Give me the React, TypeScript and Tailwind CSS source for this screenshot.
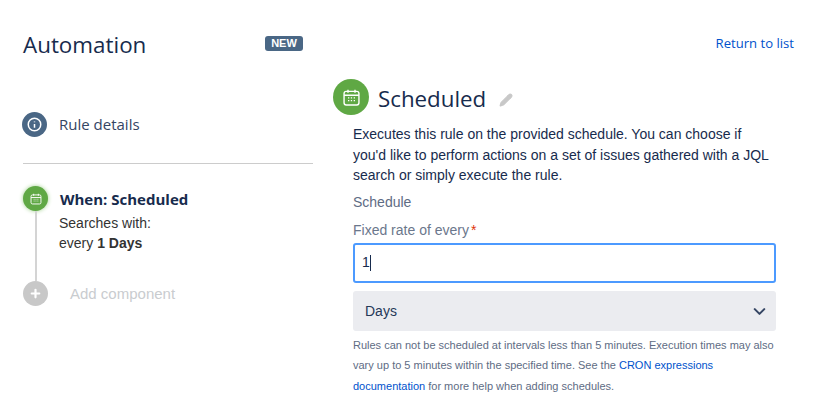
import { Pencil, ChevronDown, Plus } from 'lucide-react'

function CalendarIcon({ size }: { size: number }) {
  return (
    <svg width={size} height={size} viewBox="0 0 24 24" fill="none" stroke="currentColor">
      <rect x="3.5" y="5" width="17" height="15.5" rx="2.5" strokeWidth="1.6" />
      <path d="M3.5 9.5h17M8 3v3.5M16 3v3.5" strokeWidth="1.6" />
      <path d="M8 12.5h1.5M11.2 12.5h1.5M14.5 12.5h1.5M8 15.5h1.5M11.2 15.5h1.5M14.5 15.5h1.5" strokeWidth="1.4" />
    </svg>
  )
}

export default function App() {
  return (
    <div className="w-[813px] h-[407px] bg-white overflow-hidden flex font-['Liberation_Sans',sans-serif] text-[#253858]">
      {/* Sidebar */}
      <div className="w-[333px] shrink-0 pl-[23px] pr-[20px] pt-[29px]">
        <div className="flex items-start justify-between pr-[10px] h-[32px]">
          <h1 className="font-['Open_Sans',sans-serif] text-[22.4px] leading-[32px] text-[#172b4d]">Automation</h1>
          <span className="mt-[7px] h-[15px] w-[38px] rounded-[3px] bg-[#4a6785] text-white text-[11px] leading-[15px] font-bold text-center">NEW</span>
        </div>

        <div className="flex items-center gap-[12px] mt-[51px] -ml-[1px]">
          <div className="w-[25px] h-[25px] rounded-full bg-[#4a6785] flex items-center justify-center text-white">
            <svg width="15" height="15" viewBox="0 0 24 24" fill="none" stroke="currentColor" strokeWidth="2.4">
              <circle cx="12" cy="12" r="10" />
              <path d="M12 11v6M12 7v1.5" />
            </svg>
          </div>
          <span className="font-['Open_Sans',sans-serif] text-[15px] text-[#344563]">Rule details</span>
        </div>

        <div className="border-t border-[#cccccc] mt-[26px]" />

        <div className="flex gap-[12px] mt-[22px]">
          <div className="flex flex-col items-center w-[25px] shrink-0">
            <div className="w-[25px] h-[25px] rounded-full bg-[#5fa844] shadow-[0_0_4px_#9fd08c] flex items-center justify-center text-white">
              <CalendarIcon size={14} />
            </div>
            <div className="w-[2px] h-[70px] bg-[#d4d4d4]" />
            <div className="w-[25px] h-[25px] rounded-full bg-[#c8c8c8] flex items-center justify-center text-white">
              <Plus size={13} strokeWidth={4} />
            </div>
          </div>
          <div className="flex-1">
            <div className="font-['Open_Sans',sans-serif] font-bold text-[15px] leading-[20px] mt-[3px] text-[#172b4d]">When: Scheduled</div>
            <div className="text-[14px] leading-[20px] text-[#333333] mt-[4px] -ml-[1px]">Searches with:</div>
            <div className="text-[14px] leading-[20px] text-[#333333] -ml-[1px]">
              every <span className="font-bold">1 Days</span>
            </div>
            <div className="text-[15px] leading-[20px] text-[#c9cccf] mt-[31px] ml-[10px]">Add component</div>
          </div>
        </div>
      </div>

      {/* Detail panel */}
      <div className="flex-1 min-w-0 pt-[34px]">
        <div className="flex justify-end pr-[19px]">
          <a href="#" className="font-['Open_Sans',sans-serif] text-[13.1px] leading-[18px] text-[#0052cc]">Return to list</a>
        </div>

        <div className="flex items-center mt-[27px]">
          <div className="w-[36px] h-[36px] rounded-full bg-[#5fa844] flex items-center justify-center text-white">
            <CalendarIcon size={21} />
          </div>
          <h2 className="font-['Open_Sans',sans-serif] text-[22.3px] leading-[36px] text-[#172b4d] ml-[9px] translate-y-[2px]">Scheduled</h2>
          <Pencil size={14} className="ml-[13px] mt-[5px] text-[#c8c8c8] fill-[#c8c8c8]" />
        </div>

        <div className="w-[423px] ml-[20px]">
          <p className="text-[14px] leading-[20.5px] text-[#172b4d] mt-[9px]">
            Executes this rule on the provided schedule. You can choose if you'd like to perform actions on a set of issues gathered with a JQL search or simply execute the rule.
          </p>
          <div className="text-[14px] leading-[20px] text-[#5e6c84] mt-[6px]">Schedule</div>
          <label className="block text-[14px] leading-[20px] text-[#6b778c] mt-[8px]">
            Fixed rate of every<span className="text-[#de350b] ml-[2px]">*</span>
          </label>
          <div className="h-[40px] mt-[3px] border-2 border-[#4c9aff] rounded-[3px] px-[7px] flex items-center text-[14px] text-[#172b4d]">
            1<span className="w-px h-[16px] bg-[#172b4d]" />
          </div>
          <div className="h-[40px] mt-[8px] bg-[#ebecf0] rounded-[3px] pl-[12px] pr-[7px] pt-[1px] flex items-center justify-between text-[14px] text-[#253858]">
            Days
            <ChevronDown size={19} strokeWidth={2.6} className="text-[#344563]" />
          </div>
          <p className="text-[11px] leading-[20.5px] text-[#5e6c84] mt-[4px]">
            Rules can not be scheduled at intervals less than 5 minutes. Execution times may also vary up to 5 minutes within the specified time. See the <a href="#" className="text-[#0052cc]">CRON expressions</a> <a href="#" className="text-[#0052cc]">documentation</a> for more help when adding schedules.
          </p>
        </div>
      </div>
    </div>
  )
}
